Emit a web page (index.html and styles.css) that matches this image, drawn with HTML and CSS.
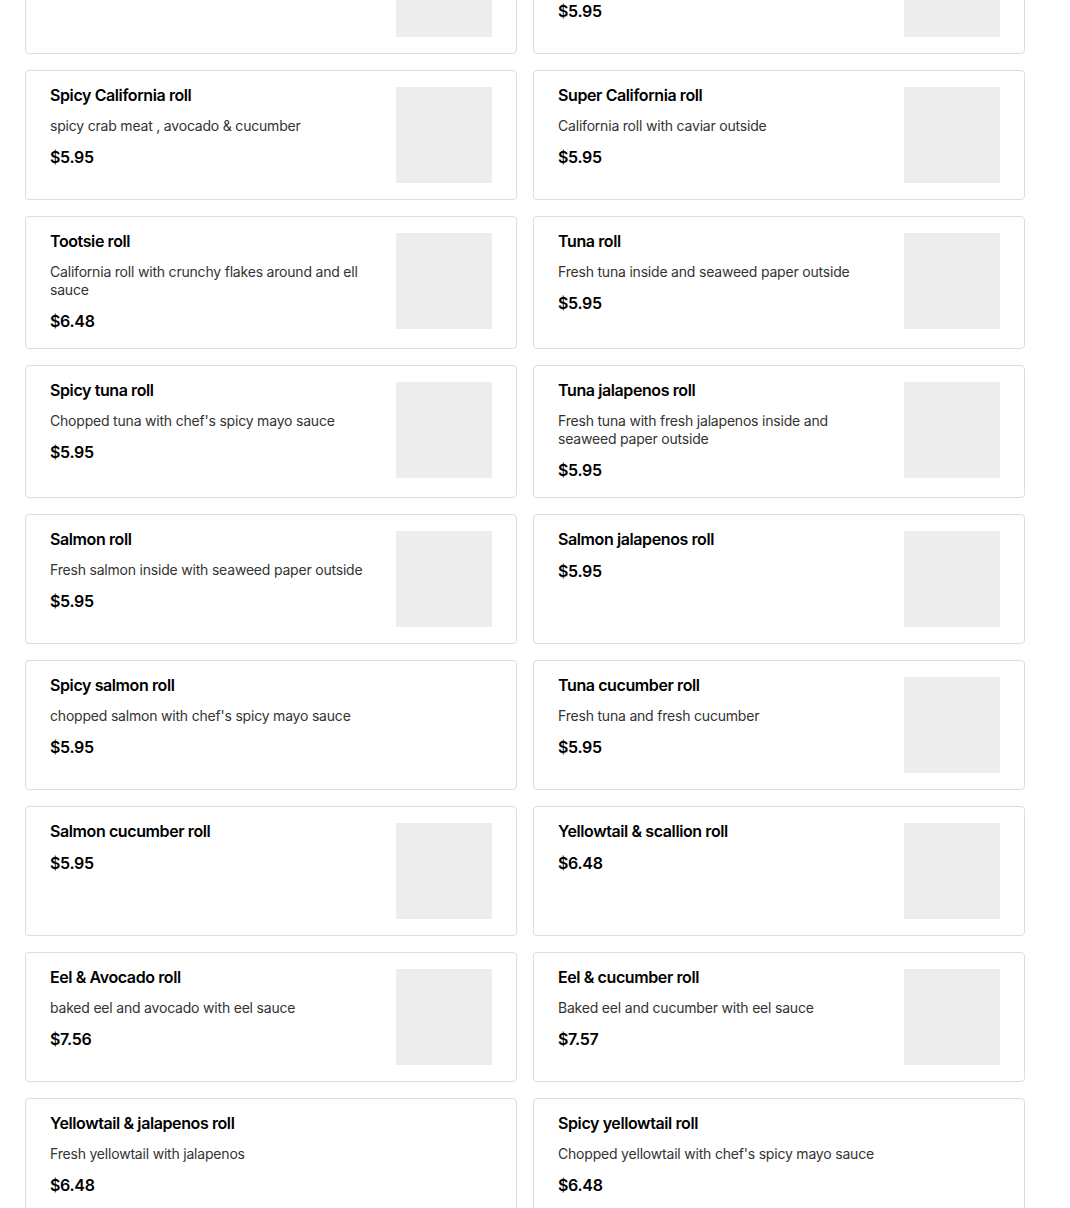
FILE: index.html
```html
<!DOCTYPE html>
<html lang="en">
<head>
<meta charset="utf-8">
<title>Menu</title>
<link rel="stylesheet" href="styles.css">
</head>
<body>
<main class="menu">
  <div class="card">
    <div class="info">
      <div class="title">California roll</div>
      <div class="desc">crab meat, avocado &amp; cucumber</div>
    </div>
    <div class="thumb"></div>
  </div>
  <div class="card">
    <div class="info">
      <div class="title">Alaska roll</div>
      <div class="desc">Salmon, avocado &amp; cucumber</div>
      <div class="price">$5.95</div>
    </div>
    <div class="thumb"></div>
  </div>

  <div class="card">
    <div class="info">
      <div class="title">Spicy California roll</div>
      <div class="desc">spicy crab meat , avocado &amp; cucumber</div>
      <div class="price">$5.95</div>
    </div>
    <div class="thumb"></div>
  </div>
  <div class="card">
    <div class="info">
      <div class="title">Super California roll</div>
      <div class="desc">California roll with caviar outside</div>
      <div class="price">$5.95</div>
    </div>
    <div class="thumb"></div>
  </div>

  <div class="card">
    <div class="info">
      <div class="title">Tootsie roll</div>
      <div class="desc">California roll with crunchy flakes around and ell sauce</div>
      <div class="price">$6.48</div>
    </div>
    <div class="thumb"></div>
  </div>
  <div class="card">
    <div class="info">
      <div class="title">Tuna roll</div>
      <div class="desc">Fresh tuna inside and seaweed paper outside</div>
      <div class="price">$5.95</div>
    </div>
    <div class="thumb"></div>
  </div>

  <div class="card">
    <div class="info">
      <div class="title">Spicy tuna roll</div>
      <div class="desc">Chopped tuna with chef's spicy mayo sauce</div>
      <div class="price">$5.95</div>
    </div>
    <div class="thumb"></div>
  </div>
  <div class="card">
    <div class="info">
      <div class="title">Tuna jalapenos roll</div>
      <div class="desc">Fresh tuna with fresh jalapenos inside and seaweed paper outside</div>
      <div class="price">$5.95</div>
    </div>
    <div class="thumb"></div>
  </div>

  <div class="card">
    <div class="info">
      <div class="title">Salmon roll</div>
      <div class="desc">Fresh salmon inside with seaweed paper outside</div>
      <div class="price">$5.95</div>
    </div>
    <div class="thumb"></div>
  </div>
  <div class="card">
    <div class="info">
      <div class="title">Salmon jalapenos roll</div>
      <div class="price">$5.95</div>
    </div>
    <div class="thumb"></div>
  </div>

  <div class="card">
    <div class="info">
      <div class="title">Spicy salmon roll</div>
      <div class="desc">chopped salmon with chef's spicy mayo sauce</div>
      <div class="price">$5.95</div>
    </div>
  </div>
  <div class="card">
    <div class="info">
      <div class="title">Tuna cucumber roll</div>
      <div class="desc">Fresh tuna and fresh cucumber</div>
      <div class="price">$5.95</div>
    </div>
    <div class="thumb"></div>
  </div>

  <div class="card">
    <div class="info">
      <div class="title">Salmon cucumber roll</div>
      <div class="price">$5.95</div>
    </div>
    <div class="thumb"></div>
  </div>
  <div class="card">
    <div class="info">
      <div class="title">Yellowtail &amp; scallion roll</div>
      <div class="price">$6.48</div>
    </div>
    <div class="thumb"></div>
  </div>

  <div class="card">
    <div class="info">
      <div class="title">Eel &amp; Avocado roll</div>
      <div class="desc">baked eel and avocado with eel sauce</div>
      <div class="price">$7.56</div>
    </div>
    <div class="thumb"></div>
  </div>
  <div class="card">
    <div class="info">
      <div class="title">Eel &amp; cucumber roll</div>
      <div class="desc">Baked eel and cucumber with eel sauce</div>
      <div class="price">$7.57</div>
    </div>
    <div class="thumb"></div>
  </div>

  <div class="card">
    <div class="info">
      <div class="title">Yellowtail &amp; jalapenos roll</div>
      <div class="desc">Fresh yellowtail with jalapenos</div>
      <div class="price">$6.48</div>
    </div>
  </div>
  <div class="card">
    <div class="info">
      <div class="title">Spicy yellowtail roll</div>
      <div class="desc">Chopped yellowtail with chef's spicy mayo sauce</div>
      <div class="price">$6.48</div>
    </div>
  </div>
</main>
</body>
</html>
```

FILE: styles.css
```css
html {
  overflow: hidden;
}

body {
  margin: 0;
  background: #ffffff;
  font-family: Inter, "Liberation Sans", Arial, sans-serif;
  color: #000000;
}

.menu {
  width: 1000px;
  margin: -76px 0 0 25px;
  display: grid;
  grid-template-columns: 1fr 1fr;
  gap: 16px;
}

.card {
  display: flex;
  align-items: flex-start;
  gap: 24px;
  padding: 16px 24px;
  min-height: 96px;
  border: 1px solid #dddddd;
  border-radius: 4px;
  background: #ffffff;
}

.info {
  flex: 1;
  min-width: 0;
}

.title {
  font-size: 16px;
  line-height: 16px;
  font-weight: 600;
  letter-spacing: -0.4px;
}

.desc {
  margin-top: 14px;
  font-size: 14px;
  line-height: 18px;
  color: #333333;
  letter-spacing: -0.2px;
}

.price {
  margin-top: 11px;
  font-size: 16px;
  line-height: 22px;
  font-weight: 600;
  letter-spacing: -0.3px;
}

.title + .price {
  margin-top: 13px;
}

.thumb {
  flex: 0 0 96px;
  width: 96px;
  height: 96px;
  background: #ededed;
}
```
